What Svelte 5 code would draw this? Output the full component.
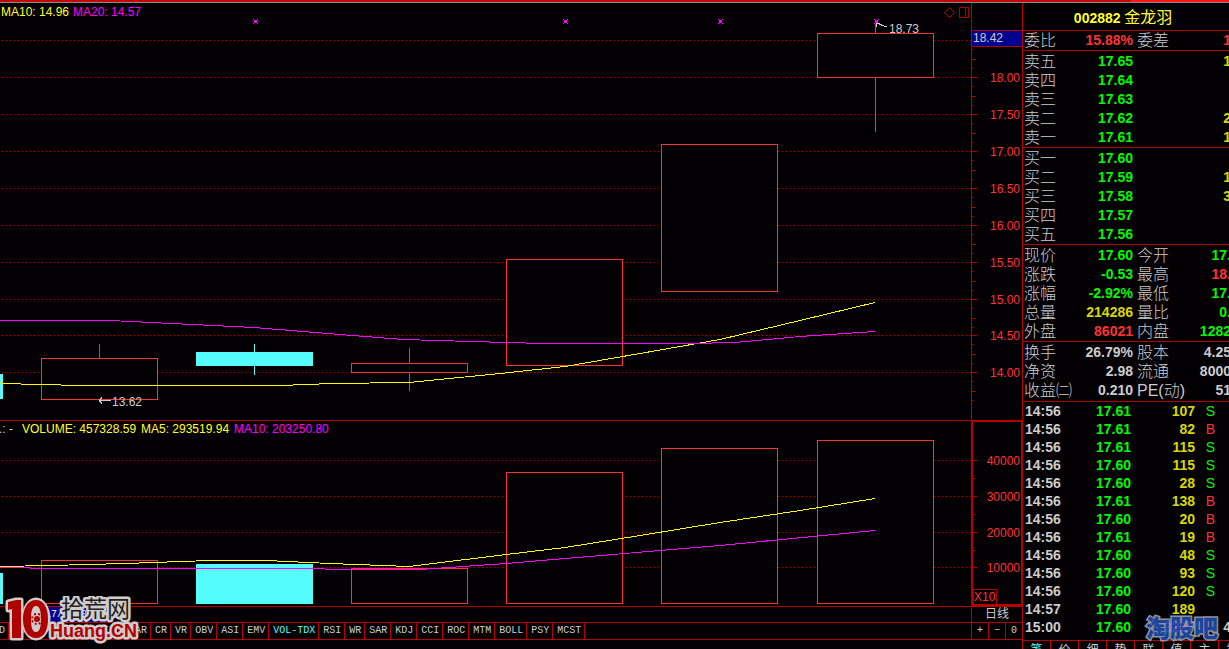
<script lang="ts">
	type Candle = { x: number; top: number; bottom: number; high?: number; low?: number; down?: boolean; w?: number };
	type Cell = [string, string, string, string, string, string];

	const grid = [40, 77, 114, 151, 188, 225, 262, 299, 335, 372];
	const prices = ['', '18.00', '17.50', '17.00', '16.50', '16.00', '15.50', '15.00', '14.50', '14.00'];
	const volumeGrid = [460, 496, 532, 567];
	const volumeLabels = ['40000', '30000', '20000', '10000'];

	const candles: Candle[] = [
		{ x: 0, top: 374, bottom: 398, down: true, w: 3 },
		{ x: 41, top: 358, bottom: 399, high: 344 },
		{ x: 196, top: 352, bottom: 365, high: 344, low: 375, down: true },
		{ x: 351, top: 363, bottom: 372, high: 348, low: 391 },
		{ x: 506, top: 259, bottom: 365 },
		{ x: 661, top: 144, bottom: 291 },
		{ x: 817, top: 33, bottom: 77, high: 24, low: 132 }
	];
	const volumes: Candle[] = [
		{ x: 0, top: 573, bottom: 603, down: true, w: 3 },
		{ x: 41, top: 560, bottom: 603 },
		{ x: 196, top: 564, bottom: 603, down: true },
		{ x: 351, top: 568, bottom: 603 },
		{ x: 506, top: 472, bottom: 603 },
		{ x: 661, top: 448, bottom: 603 },
		{ x: 817, top: 440, bottom: 603 }
	];
	const marks = [255, 565, 720, 876];

	const indicators = ['MACD', 'DMI', 'DMA', 'FSL', 'TRIX', 'BRAR', 'CR', 'VR', 'OBV', 'ASI', 'EMV', 'VOL-TDX', 'RSI', 'WR', 'SAR', 'KDJ', 'CCI', 'ROC', 'MTM', 'BOLL', 'PSY', 'MCST'];
	let indicator = $state('VOL-TDX');

	// label, value, value colour, second label, second value, second colour
	const groups: Cell[][] = [
		[['委比', '15.88%', 'red', '委差', '1', 'red']],
		[
			['卖五', '17.65', 'green', '', '1', 'yellow'],
			['卖四', '17.64', 'green', '', '', 'yellow'],
			['卖三', '17.63', 'green', '', '', 'yellow'],
			['卖二', '17.62', 'green', '', '2', 'yellow'],
			['卖一', '17.61', 'green', '', '1', 'yellow']
		],
		[
			['买一', '17.60', 'green', '', '', 'yellow'],
			['买二', '17.59', 'green', '', '1', 'yellow'],
			['买三', '17.58', 'green', '', '3', 'yellow'],
			['买四', '17.57', 'green', '', '', 'yellow'],
			['买五', '17.56', 'green', '', '', 'yellow']
		],
		[
			['现价', '17.60', 'green', '今开', '17.', 'green'],
			['涨跌', '-0.53', 'green', '最高', '18.', 'red'],
			['涨幅', '-2.92%', 'green', '最低', '17.', 'green'],
			['总量', '214286', 'yellow', '量比', '0.', 'green'],
			['外盘', '86021', 'red', '内盘', '1282', 'green']
		],
		[
			['换手', '26.79%', 'grey', '股本', '4.25', 'grey'],
			['净资', '2.98', 'grey', '流通', '8000', 'grey'],
			['收益㈡', '0.210', 'grey', 'PE(动)', '51', 'grey']
		]
	];

	const ticks = [
		['14:56', '17.61', '107', 'S'],
		['14:56', '17.61', '82', 'B'],
		['14:56', '17.61', '115', 'S'],
		['14:56', '17.60', '115', 'S'],
		['14:56', '17.60', '28', 'S'],
		['14:56', '17.61', '138', 'B'],
		['14:56', '17.60', '20', 'B'],
		['14:56', '17.61', '19', 'B'],
		['14:56', '17.60', '48', 'S'],
		['14:56', '17.60', '93', 'S'],
		['14:56', '17.60', '120', 'S'],
		['14:57', '17.60', '189', ''],
		['15:00', '17.60', '3227', '']
	];

	const views = ['笔', '价', '细', '势', '联', '值', '主', '筹'];
	let view = $state('笔');
</script>

{#snippet bar(c: Candle)}
	{@const mid = c.x + 58}
	{#if c.high}
		<line class={c.down ? 'cyan-line' : 'red-line'} x1={mid + 0.5} x2={mid + 0.5} y1={c.high} y2={c.top} />
	{/if}
	{#if c.low}
		<line class={c.down ? 'cyan-line' : 'red-line'} x1={mid + 0.5} x2={mid + 0.5} y1={c.bottom} y2={c.low} />
	{/if}
	{#if c.down}
		<rect class="down" x={c.x} y={c.top} width={c.w ?? 117} height={c.bottom - c.top + 1} />
	{:else}
		<rect class="up" x={c.x + 0.5} y={c.top + 0.5} width="116" height={c.bottom - c.top} />
	{/if}
{/snippet}

<div class="app">
	<div class="strip"></div>
	<div class="columns">
		<main>
			<svg class="chart" viewBox="0 3 1022 417">
				{#each grid as y, i}
					<line class="grid" x1="2" x2="971" y1={y + 0.5} y2={y + 0.5} />
					<line class="axis" x1="972" x2="977" y1={y + 0.5} y2={y + 0.5} />
					<line class="axis" x1="972" x2="973" y1={y + 9.5} y2={y + 9.5} />
					<line class="axis" x1="972" x2="975" y1={y + 19.5} y2={y + 19.5} />
					<line class="axis" x1="972" x2="973" y1={y + 28.5} y2={y + 28.5} />
					<text class="label" x="1020" y={y + 5} text-anchor="end">{prices[i]}</text>
				{/each}
				<line class="axis" x1="971.5" x2="971.5" y1="3" y2="420" />
				<rect class="tag" x="971.5" y="30.5" width="51" height="16" />
				<text class="light" x="973" y="42">18.42</text>

				{#each candles as c}
					{@render bar(c)}
				{/each}
				<g class="ma" transform="translate(0 0.5)">
					<polyline class="yellow-line" points="0,383 41,384 80,385 280,385 332,383 409,382 500,373 565,366 640,353 720,339 800,320 875,302" />
					<polyline class="magenta-line" points="0,320 110,320 254,327 340,334 403,339 506,342 545,343 690,343 735,342 800,336 875,331" />
				</g>
				{#each marks as x}
					<path class="mark" d="M{x - 2} 19h1v1h3v-1h1v1h-1v3h1v1h-1v-1h-3v1h-1v-1h1v-3h-1z" />
				{/each}

				<path class="arrow" d="M876 23l11 4M876 23v4M876 23h4" />
				<text class="light" x="889" y="33">18.73</text>
				<path class="arrow" d="M99 400.5h12M99 400.5l3-3M99 400.5l3 3" />
				<text class="light" x="112" y="406">13.62</text>

				<path class="icon" d="M949.5 7.5l5 5-5 5-5-5z" />
				<path class="icon" d="M959.5 7.5h9v10h-9zM965.5 7.5v10" />
				<text class="yellow-text" x="1" y="16">MA10: 14.96</text>
				<text class="magenta-text" x="73" y="16">MA20: 14.57</text>
			</svg>

			<svg class="chart" viewBox="0 420 1022 186">
				<line class="axis" x1="0" x2="1022" y1="420.5" y2="420.5" />
				{#each volumeGrid as y, i}
					<line class="grid" x1="2" x2="971" y1={y + 0.5} y2={y + 0.5} />
					<line class="axis" x1="972" x2="977" y1={y + 0.5} y2={y + 0.5} />
					{#if i < 3}
						<line class="axis" x1="972" x2="975" y1={y + 18.5} y2={y + 18.5} />
					{/if}
					<text class="label" x="1020" y={y + 5} text-anchor="end">{volumeLabels[i]}</text>
				{/each}
				<rect class="frame" x="972" y="421" width="50" height="184" />
				<rect class="x10" x="973.5" y="589.5" width="23" height="15" />
				<text class="label" x="974" y="601">X10</text>

				{#each volumes as c}
					{@render bar(c)}
				{/each}
				<g class="ma" transform="translate(0 0.5)">
					<polyline class="yellow-line" points="0,566 50,565 125,563 210,560 266,560 330,563 409,566 506,554 565,547 640,535 720,522 800,510 875,498" />
					<polyline class="magenta-line" points="0,567 60,568 300,568 350,569 420,569 506,563 565,558 720,545 875,530" />
				</g>

				<text class="light" x="-1" y="433">.: -</text>
				<text class="yellow-text" x="22" y="433">VOLUME: 457328.59</text>
				<text class="yellow-text" x="141" y="433">MA5: 293519.94</text>
				<text class="magenta-text" x="234" y="433">MA10: 203250.80</text>
			</svg>

			<footer>
				<div class="line">
					<div class="dates"><span>2017/08/07/一</span></div>
					<button class="period">日线</button>
				</div>
				<div class="line">
					<nav class="indicators">
						{#each indicators as name}
							<button class:active={name === indicator} onclick={() => (indicator = name)}>{name}</button>
						{/each}
					</nav>
					<div class="zoom">
						<button aria-label="Zoom in">+</button>
						<button aria-label="Zoom out">−</button>
						<button>0</button>
					</div>
				</div>

				<svg class="site" width="140" height="48" viewBox="0 596 140 48">
					<g class="halo">
						<path d="M8 602l8-2h5v38h-9v-29l-4 1z" />
						<ellipse cx="36" cy="619" rx="12" ry="19" />
					</g>
					<path class="brand" d="M8 602l8-2h5v38h-9v-29l-4 1z" />
					<path class="brand" fill-rule="evenodd" d="M36 600c8 0 12 8 12 19s-4 19-12 19-13-8-13-19 5-19 13-19zM36 606c-4 0-5 6-5 13s1 13 5 13 5-6 5-13-1-13-5-13z" />
					<circle class="gear" cx="37" cy="619" r="5" />
					<circle class="brand" cx="37" cy="619" r="3" />
					<text class="cn" x="61" y="617">拾荒网</text>
					<text class="en" x="50" y="637">Huang.CN</text>
				</svg>
			</footer>
		</main>

		<aside>
			<h1><b>002882</b> 金龙羽</h1>
			{#each groups as rows}
				<table class="quote">
					<colgroup><col class="c1" /><col class="c2" /><col class="c3" /><col class="c4" /></colgroup>
					<tbody>
						{#each rows as [name, value, color, name2, value2, color2]}
							<tr>
								<th>{name}</th>
								<td class={color}>{value}</td>
								<th>{name2}</th>
								<td class={color2}>{value2}</td>
							</tr>
						{/each}
					</tbody>
				</table>
			{/each}

			<div class="deals">
				<table class="ticks">
					<tbody>
						{#each ticks as [time, price, amount, side]}
							<tr>
								<td class="time grey">{time}</td>
								<td class="price green">{price}</td>
								<td class="amount {amount === '3227' ? 'magenta' : 'yellow'}">{amount}</td>
								<td class="side {side === 'B' ? 'red' : 'green'}">{side}</td>
								<td class="count grey">{amount === '3227' ? '4' : ''}</td>
							</tr>
						{/each}
					</tbody>
				</table>
				<div class="forum">淘股吧</div>
			</div>

			<nav class="views">
				{#each views as name}
					<button class:active={name === view} onclick={() => (view = name)}>{name}</button>
				{/each}
			</nav>
		</aside>
	</div>
</div>

<style>
	:global(body) {
		background: #030004;
	}

	.app {
		display: flex;
		flex-direction: column;
		height: 100vh;
		overflow: hidden;
		background: #030004;
		color: #ccc;
		font: 12px 'Liberation Sans', 'Noto Sans CJK SC', sans-serif;
	}

	.strip {
		flex: none;
		height: 2px;
		border-bottom: 1px solid #8c8c8c;
		background: linear-gradient(90deg, #c00808 92%, #ff1414 92%);
	}

	.columns {
		display: flex;
		flex: 1;
		min-height: 0;
	}

	main {
		flex: 1;
		min-width: 0;
	}

	/* charts */
	.chart {
		display: block;
		width: 100%;
		shape-rendering: crispEdges;
	}

	.grid {
		stroke: #a80000;
		stroke-dasharray: 1 3;
	}

	.axis {
		stroke: #b40000;
	}

	.frame {
		fill: none;
		stroke: #b80000;
		stroke-width: 2;
	}

	.x10 {
		fill: #030004;
		stroke: #b40000;
	}

	.tag {
		fill: #000090;
		stroke: #b40000;
	}

	.up {
		fill: #030004;
		stroke: #ff3232;
	}

	.down {
		fill: #54fcfc;
	}

	.red-line {
		stroke: #ff3232;
	}

	.cyan-line {
		stroke: #54fcfc;
	}

	.ma {
		fill: none;
	}

	.yellow-line {
		stroke: #ffff00;
	}

	.magenta-line {
		stroke: #ff00ff;
	}

	.label {
		fill: #ff3232;
	}

	.light {
		fill: #ccc;
	}

	.yellow-text {
		fill: #ffff30;
	}

	.magenta-text {
		fill: #ff00ff;
	}

	.mark {
		fill: #ff00ff;
	}

	.arrow {
		fill: none;
		stroke: #ccc;
	}

	.icon {
		fill: none;
		stroke: #a80000;
	}

	/* bottom bars */
	footer {
		position: relative;
		border-bottom: 1px solid #b40000;
	}

	.line {
		display: flex;
		height: 15px;
		border-top: 1px solid #b40000;
	}

	.line:nth-child(2) {
		height: 16px;
	}

	button {
		margin: 0;
		padding: 0;
		border: 0;
		border-radius: 0;
		background: none;
		color: #ccc;
		font: inherit;
		cursor: pointer;
	}

	.dates {
		flex: 1;
		padding-left: 33px;
		color: #fff;
		font: 10px/15px 'Liberation Mono', 'Noto Sans CJK SC', monospace;
	}

	.dates span {
		display: inline-block;
		height: 15px;
		background: #000090;
	}

	.period {
		width: 51px;
		border-left: 1px solid #b40000;
		line-height: 15px;
	}

	.indicators {
		display: flex;
		flex: 1;
		min-width: 0;
		overflow: hidden;
		margin-left: -23px;
		font: 10px/16px 'Liberation Mono', monospace;
	}

	.indicators button {
		flex: none;
		padding: 0 3px 0 4px;
		border-right: 1px solid #b40000;
	}

	.indicators .active,
	.views .active {
		color: #54fcfc;
	}

	.zoom {
		display: flex;
		width: 51px;
		font: 10px/16px 'Liberation Mono', monospace;
	}

	.zoom button {
		flex: 1;
		border-left: 1px solid #b40000;
	}

	.site {
		position: absolute;
		left: 0;
		bottom: -5px;
		pointer-events: none;
	}

	.halo {
		fill: #d0cccc;
		stroke: #d0cccc;
		stroke-width: 5;
		stroke-linejoin: round;
	}

	.brand {
		fill: #b00000;
	}

	.gear {
		fill: none;
		stroke: #b00000;
		stroke-width: 2;
		stroke-dasharray: 2 2;
	}

	.cn,
	.en {
		stroke: #d0cccc;
		stroke-width: 5;
		stroke-linejoin: round;
		paint-order: stroke;
	}

	.cn {
		fill: #202020;
		font: 23px 'Noto Sans CJK SC', sans-serif;
	}

	.en {
		fill: #b00000;
		font: bold 18px 'Liberation Sans', sans-serif;
	}

	/* quote panel */
	aside {
		display: flex;
		flex-direction: column;
		flex: none;
		box-sizing: border-box;
		width: 207px;
		overflow: hidden;
		border-left: 1px solid #b40000;
	}

	h1 {
		flex: none;
		height: 27px;
		margin: 0;
		padding-right: 6px;
		color: #ffff30;
		font: 16px/27px 'Noto Sans CJK SC', sans-serif;
		text-align: center;
	}

	h1 b {
		font: bold 14px 'Liberation Sans', sans-serif;
	}

	table {
		width: 208px;
		border-collapse: separate;
		border-spacing: 0;
		table-layout: fixed;
	}

	td,
	th {
		padding: 0;
		white-space: nowrap;
	}

	td {
		font-size: 14px;
		font-weight: bold;
		text-align: right;
	}

	.quote {
		flex: none;
		padding-top: 1px;
		border-top: 1px solid #b40000;
	}

	.quote:nth-of-type(1) {
		padding-top: 0;
	}

	.quote:nth-of-type(5) {
		padding-bottom: 1px;
	}

	.quote th,
	.quote td {
		height: 19px;
		line-height: 19px;
	}

	.quote th {
		padding-left: 1px;
		font-size: 16px;
		font-weight: 300;
		text-align: left;
	}

	.quote th:nth-child(3) {
		padding-left: 4px;
	}

	.c1 {
		width: 52px;
	}

	.c2 {
		width: 58px;
	}

	.c3 {
		width: 38px;
	}

	.c4 {
		width: 60px;
	}

	.deals {
		position: relative;
		flex: none;
		padding-bottom: 4px;
		border-top: 1px solid #b40000;
	}

	.ticks td {
		height: 18px;
		line-height: 18px;
	}

	.ticks .time {
		width: 48px;
		padding-left: 2px;
		text-align: left;
	}

	.price {
		width: 58px;
	}

	.amount {
		width: 64px;
	}

	.ticks .side {
		width: 20px;
		font-weight: normal;
	}

	.red {
		color: #ff3232;
	}

	.green {
		color: #00f800;
	}

	.yellow {
		color: #d8d800;
	}

	.grey {
		color: #ccc;
	}

	.magenta {
		color: #ff50ff;
	}

	.forum {
		position: absolute;
		right: 11px;
		bottom: 1px;
		color: #1c4cb0;
		font: 900 24px/24px 'Noto Sans CJK SC', sans-serif;
		-webkit-text-stroke: 3px #a0a0a8;
		paint-order: stroke fill;
		opacity: 0.9;
	}

	.views {
		display: flex;
		flex: none;
		border-top: 1px solid #b40000;
	}

	.views button {
		flex: none;
		box-sizing: border-box;
		width: 28px;
		height: 17px;
		border-right: 1px solid #b40000;
		line-height: 16px;
	}
</style>
